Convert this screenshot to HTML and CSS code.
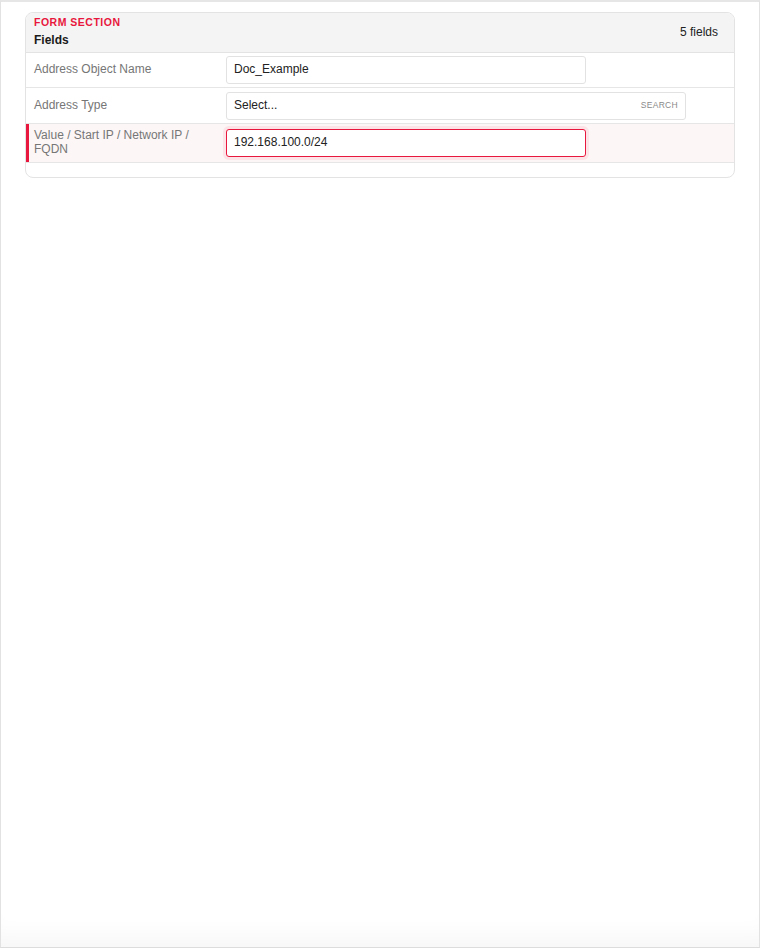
FILE: index.html
```html
<!DOCTYPE html>
<html>
<head>
<meta charset="utf-8">
<link rel="stylesheet" href="styles.css">
</head>
<body>
<div class="frame">
  <div class="card">
    <div class="card-head">
      <div class="titles">
        <div class="eyebrow">FORM SECTION</div>
        <div class="title">Fields</div>
      </div>
      <div class="count">5 fields</div>
    </div>
    <div class="row">
      <div class="label">Address Object Name</div>
      <div class="field"><div class="input">Doc_Example</div></div>
    </div>
    <div class="row row-select">
      <div class="label">Address Type</div>
      <div class="field"><div class="input select"><span>Select...</span><span class="search">SEARCH</span></div></div>
    </div>
    <div class="row active">
      <div class="label">Value / Start IP / Network IP / FQDN</div>
      <div class="field"><div class="input focused">192.168.100.0/24</div></div>
    </div>
    <div class="card-foot"></div>
  </div>
</div>
</body>
</html>
```
FILE: styles.css
```css
* { box-sizing: border-box; }
html, body { margin: 0; padding: 0; background: #fff; }
body { font-family: "Liberation Sans", Arial, sans-serif; color: #222; }
.frame {
  height: 948px;
  border-top: 2px solid #e6e6e6;
  border-left: 1px solid #e2e2e2;
  border-right: 1px solid #e2e2e2;
  border-bottom: 1px solid #dcdcdc;
  padding: 10px 24px 0 24px;
  box-shadow: inset 0 -26px 22px -14px rgba(0,0,0,0.035);
}
.card {
  border: 1px solid #e3e3e3;
  border-radius: 8px;
  overflow: hidden;
  background: #fff;
}
.card-head {
  background: #f4f4f4;
  display: flex;
  align-items: center;
  justify-content: space-between;
  padding: 2px 16px 4px 8px;
  border-bottom: 1px solid #e3e3e3;
  height: 40px;
}
.eyebrow {
  color: #e8173d;
  font-size: 10.5px;
  font-weight: 700;
  letter-spacing: 0.5px;
  line-height: 14px;
}
.title {
  font-size: 12px;
  font-weight: 700;
  color: #1b1b1b;
  line-height: 16px;
  margin-top: 3px;
}
.count { font-size: 12px; color: #222; line-height: 14px; padding-bottom: 0; }
.row {
  display: grid;
  grid-template-columns: 192px 1fr;
  align-items: center;
  border-bottom: 1px solid #e6e6e6;
  padding: 3px 8px 3px 8px;
  min-height: 35px;
}
.row.row-select {
  padding-top: 4px;
  min-height: 36px;
}
.row.active {
  background: #fcf6f6;
  box-shadow: inset 3px 0 0 #e8173d;
  padding-top: 4px;
  padding-bottom: 4px;
}
.label {
  font-size: 12px;
  color: #767676;
  line-height: 14px;
  padding-right: 6px;
  padding-bottom: 2px;
}
.field { display: flex; }
.input {
  width: 360px;
  height: 28px;
  border: 1px solid #e2e2e2;
  border-radius: 3px;
  background: #fff;
  font-size: 12px;
  line-height: 14px;
  color: #222;
  padding: 0 7px 2px 7px;
  display: flex;
  align-items: center;
}
.input.select {
  width: 460px;
  justify-content: space-between;
}
.search {
  font-size: 8.5px;
  color: #8a8a8a;
  letter-spacing: 0.3px;
}
.input.focused {
  border-color: #e8173d;
  box-shadow: 0 0 0 3px #fce3e7;
}
.card-foot { height: 14px; }
```
